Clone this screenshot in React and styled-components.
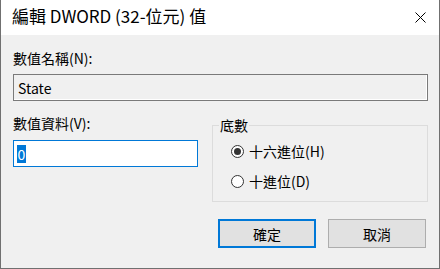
import React from "react";
import styled, { createGlobalStyle } from "styled-components";

const Global = createGlobalStyle`
  html, body { margin: 0; padding: 0; background: #ffffff; }
  * { box-sizing: border-box; }
  body { font-family: "Noto Sans CJK TC", "Noto Sans", sans-serif; }
`;

const Window = styled.div`
  width: 440px;
  height: 269px;
  border: 1px solid #707070;
  border-top: none;
  display: flex;
  flex-direction: column;
  background: #f0f0f0;
  color: #000;
`;

const TitleBar = styled.div`
  height: 35px;
  background: #ffffff;
  display: flex;
  align-items: center;
  justify-content: space-between;
  padding: 0 13px 3px 11px;
`;

const Title = styled.div`
  font-size: 17px;
  line-height: 20px;
  white-space: nowrap;
`;

const CloseIcon = styled.svg`
  width: 11px;
  height: 11px;
  display: block;
  margin-top: 2px;
`;

const Body = styled.div`
  flex: 1;
  display: flex;
  flex-direction: column;
  padding: 15px 11px 20px 12px;
`;

const Label = styled.div`
  font-size: 14px;
  line-height: 16px;
  height: 16px;
  white-space: nowrap;
  color: #000;
`;

const TextBox = styled.div`
  height: 27px;
  margin-top: ${(p) => p.$gap}px;
  border: 1px solid ${(p) => (p.$focused ? "#0078d7" : "#7a7a7a")};
  background: ${(p) => (p.$focused ? "#ffffff" : "#f0f0f0")};
  box-shadow: ${(p) => (p.$focused ? "none" : "inset -1px -1px 0 #ffffff")};
  display: flex;
  align-items: center;
  padding-left: ${(p) => (p.$focused ? 3 : 4)}px;
  font-size: 14px;
  white-space: nowrap;
`;

const Selected = styled.span`
  background: #0078d7;
  color: #ffffff;
  display: inline-block;
  height: 18px;
  line-height: 18px;
  padding: 0 0.5px;
`;

const Row = styled.div`
  margin-top: 14px;
  display: grid;
  grid-template-columns: 185px 216px;
  column-gap: 14px;
  height: 87px;
`;

const Column = styled.div`
  display: flex;
  flex-direction: column;
`;

const GroupBox = styled.div`
  position: relative;
  margin-top: 10px;
  height: 77px;
  border: 1px solid #dcdcdc;
  display: flex;
  flex-direction: column;
  gap: 10px;
  padding: 15px 0 0 18px;
`;

const Legend = styled.div`
  position: absolute;
  top: -9px;
  left: 6px;
  padding: 0 1px;
  background: #f0f0f0;
  font-size: 14px;
  line-height: 16px;
`;

const RadioRow = styled.label`
  display: flex;
  align-items: center;
  height: 20px;
  gap: 5px;
  font-size: 14px;
  white-space: nowrap;
`;

const RadioCircle = styled.span`
  width: 13px;
  height: 13px;
  border-radius: 50%;
  border: 1px solid #333333;
  background: #ffffff;
  display: flex;
  align-items: center;
  justify-content: center;
  &::after {
    content: "";
    width: 7px;
    height: 7px;
    border-radius: 50%;
    background: ${(p) => (p.$checked ? "#333333" : "transparent")};
  }
`;

const ButtonRow = styled.div`
  margin-top: 17px;
  display: flex;
  justify-content: flex-end;
  gap: 12px;
  padding-right: 2px;
`;

const Button = styled.div`
  width: 98px;
  height: 29px;
  background: #e1e1e1;
  border: ${(p) => (p.$default ? "2px solid #0078d7" : "1px solid #adadad")};
  display: flex;
  align-items: center;
  justify-content: center;
  font-size: 14px;
`;

export default function App() {
  return (
    <>
      <Global />
      <Window>
        <TitleBar>
          <Title>編輯 DWORD (32-位元) 值</Title>
          <CloseIcon viewBox="0 0 11 11">
            <path d="M0.5 0.5 L10.5 10.5 M10.5 0.5 L0.5 10.5" stroke="#000" strokeWidth="1" fill="none" />
          </CloseIcon>
        </TitleBar>
        <Body>
          <Label>數值名稱(N):</Label>
          <TextBox $gap={8}>State</TextBox>
          <Row>
            <Column>
              <Label>數值資料(V):</Label>
              <TextBox $gap={9} $focused>
                <Selected>0</Selected>
              </TextBox>
            </Column>
            <GroupBox>
              <Legend>底數</Legend>
              <RadioRow>
                <RadioCircle $checked />
                十六進位(H)
              </RadioRow>
              <RadioRow>
                <RadioCircle />
                十進位(D)
              </RadioRow>
            </GroupBox>
          </Row>
          <ButtonRow>
            <Button $default>確定</Button>
            <Button>取消</Button>
          </ButtonRow>
        </Body>
      </Window>
    </>
  );
}
